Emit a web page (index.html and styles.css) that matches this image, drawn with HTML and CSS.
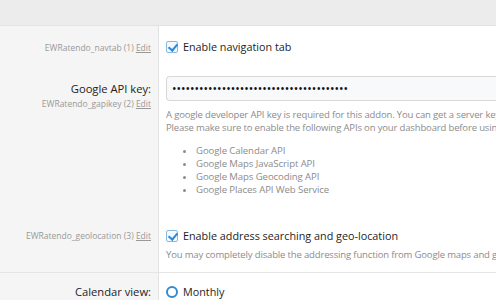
FILE: index.html
```html
<!DOCTYPE html>
<html lang="en">
<head>
  <meta charset="UTF-8">
  <title>Options</title>
  <link rel="stylesheet" href="styles.css">
</head>
<body>
  <div class="top-bar"></div>

  <div class="form-block">
    <div class="form-row row-navtab">
      <div class="form-label">
        <span class="hint">EWRatendo_navtab (1) <a href="#">Edit</a></span>
      </div>
      <div class="form-input">
        <label class="check"><span class="box checked"></span>Enable navigation tab</label>
      </div>
    </div>

    <div class="form-row row-gapikey">
      <div class="form-label">
        <span class="title">Google API key:</span>
        <span class="hint">EWRatendo_gapikey (2) <a href="#">Edit</a></span>
      </div>
      <div class="form-input">
        <div class="text-box">•••••••••••••••••••••••••••••••••••••••</div>
        <p class="explain">A google developer API key is required for this addon. You can get a server key from the Google Developers Console.<br>
        Please make sure to enable the following APIs on your dashboard before using this addon:</p>
        <ul class="api-list">
          <li>Google Calendar API</li>
          <li>Google Maps JavaScript API</li>
          <li>Google Maps Geocoding API</li>
          <li>Google Places API Web Service</li>
        </ul>
      </div>
    </div>

    <div class="form-row row-geo">
      <div class="form-label">
        <span class="hint">EWRatendo_geolocation (3) <a href="#">Edit</a></span>
      </div>
      <div class="form-input">
        <label class="check"><span class="box checked"></span>Enable address searching and geo-location</label>
        <p class="explain">You may completely disable the addressing function from Google maps and geo-location searching.</p>
      </div>
    </div>
  </div>

  <div class="form-block">
    <div class="form-row row-calendar">
      <div class="form-label">
        <span class="title">Calendar view:</span>
      </div>
      <div class="form-input">
        <label class="check"><span class="radio"></span>Monthly</label>
      </div>
    </div>
  </div>
</body>
</html>
```

FILE: styles.css
```css
* {
  margin: 0;
  padding: 0;
  box-sizing: border-box;
}
body {
  font-family: 'Open Sans', 'Noto Sans', Arial, sans-serif;
  font-size: 12px;
  color: #141414;
  background: #fff;
  overflow: hidden;
  white-space: nowrap;
}
.top-bar {
  height: 26px;
  background: #ececec;
  border-bottom: 1px solid #e3e3e3;
}
.form-block {
  border-bottom: 1px solid #e5e5e5;
  background: linear-gradient(90deg, #f5f5f5 158px, #e2e2e2 158px, #e2e2e2 159px, #fff 159px);
}
.form-row {
  display: flex;
}
.form-label {
  width: 159px;
  flex-shrink: 0;
  padding-right: 8px;
  text-align: right;
  display: flex;
  flex-direction: column;
  align-items: flex-end;
}
.form-input {
  flex: 1;
  padding-left: 7px;
  min-width: 0;
  overflow: hidden;
}
.title {
  font-size: 11.2px;
  color: #222;
  line-height: 16px;
}
.hint {
  font-size: 8.5px;
  color: #999;
  line-height: 14px;
}
.hint a {
  color: #999;
  text-decoration: underline;
}
.check {
  display: flex;
  align-items: center;
  gap: 5px;
  line-height: 16px;
  font-size: 10.8px;
  color: #1d1d1d;
}
.box {
  width: 12px;
  height: 12px;
  border: 1px solid #8ab8dc;
  border-radius: 2px;
  position: relative;
  background: #f4f9fd;
}
.box.checked::after {
  content: "";
  position: absolute;
  left: 3px;
  top: 0px;
  width: 4px;
  height: 7px;
  border: solid #2c8ad6;
  border-width: 0 2px 2px 0;
  transform: rotate(40deg);
}
.radio {
  width: 12px;
  height: 12px;
  border: 2px solid #2f8bd3;
  border-radius: 50%;
}
.text-box {
  height: 25px;
  border: 1px solid #d8d8d8;
  border-right: none;
  border-radius: 4px 0 0 4px;
  background: #f7f9fb;
  padding: 0 5px;
  line-height: 23px;
  font-size: 12px;
  color: #111;
}
.explain {
  font-size: 9.5px;
  letter-spacing: -0.15px;
  color: #8c8c8c;
  line-height: 13px;
  margin-top: 7px;
}
.api-list {
  margin: 10px 0 0 30px;
  font-size: 9.6px;
  letter-spacing: -0.1px;
  color: #8c8c8c;
  line-height: 13px;
}
.row-navtab {
  padding-top: 13px;
  height: 50px;
}
.row-navtab .hint {
  margin-top: 2px;
}
.row-gapikey {
  height: 152px;
}
.row-gapikey .form-label {
  padding-top: 5px;
}
.row-geo {
  height: 44px;
}
.row-geo .hint {
  margin-top: 1px;
}
.row-geo .explain {
  margin-top: 4px;
}
.row-calendar {
  padding-top: 11px;
  height: 40px;
}
```
